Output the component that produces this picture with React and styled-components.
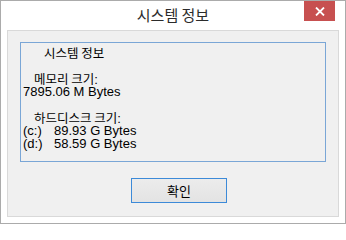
import React from "react";
import styled, { createGlobalStyle } from "styled-components";

const Global = createGlobalStyle`
  html, body { margin: 0; padding: 0; background: #ffffff; }
  #root { width: 346px; height: 224px; }
`;

const Window = styled.div`
  box-sizing: border-box;
  width: 346px;
  height: 224px;
  border: 1px solid #ababab;
  background: #ffffff;
  display: flex;
  flex-direction: column;
  padding: 0 6px 6px 6px;
  font-family: "Liberation Sans", "Noto Sans CJK KR", sans-serif;
`;

const TitleBar = styled.div`
  position: relative;
  height: 29px;
  flex: none;
  display: flex;
  align-items: center;
  justify-content: center;
`;

const Title = styled.div`
  font-family: "Noto Sans CJK KR", sans-serif;
  font-size: 15px;
  color: #2b2b2b;
  line-height: 15px;
  margin-top: -2px;
`;

const CloseButton = styled.div`
  position: absolute;
  top: 0;
  right: 4px;
  width: 31px;
  height: 20px;
  background: #c75050;
  display: flex;
  align-items: center;
  justify-content: center;
`;

const Client = styled.div`
  flex: 1;
  border: 1px solid #d9d9d9;
  background: #f0f0f0;
  display: flex;
  flex-direction: column;
  padding: 11px 12px 0 12px;
`;

const GroupBox = styled.div`
  box-sizing: border-box;
  height: 120px;
  border: 1px solid #7aa6d6;
  padding: 3px 0 0 2px;
  display: flex;
  flex-direction: column;
`;

const Line = styled.div`
  height: 13px;
  line-height: 13px;
  font-size: 13px;
  color: #000;
  white-space: pre;
  padding-left: ${(p) => p.$indent || 0}px;
`;

const Ko = styled.span`
  font-family: "Noto Sans CJK KR", sans-serif;
  font-size: 12.5px;
`;

const Drive = styled.span`
  display: inline-block;
  width: 31px;
`;

const OkButton = styled.button`
  box-sizing: border-box;
  margin: 16px 0 0 111px;
  width: 96px;
  height: 25px;
  border: 1px solid #3c8ad8;
  background: linear-gradient(#ececec, #e3e3e3);
  font-family: "Noto Sans CJK KR", sans-serif;
  font-size: 13px;
  color: #000;
  padding: 0;
  display: flex;
  align-items: center;
  justify-content: center;
`;

export default function App() {
  return (
    <>
      <Global />
      <Window>
        <TitleBar>
          <Title>시스템 정보</Title>
          <CloseButton>
            <svg width="10" height="9" viewBox="0 0 10 9">
              <path d="M1 0.5 L9 8.5 M9 0.5 L1 8.5" stroke="#fff" strokeWidth="1.8" />
            </svg>
          </CloseButton>
        </TitleBar>
        <Client>
          <GroupBox>
            <Line $indent={21}><Ko>시스템 정보</Ko></Line>
            <Line />
            <Line $indent={11}><Ko>메모리 크기</Ko>:</Line>
            <Line>7895.06 M Bytes</Line>
            <Line />
            <Line $indent={11}><Ko>하드디스크 크기</Ko>:</Line>
            <Line><Drive>(c:)</Drive>89.93 G Bytes</Line>
            <Line><Drive>(d:)</Drive>58.59 G Bytes</Line>
          </GroupBox>
          <OkButton>확인</OkButton>
        </Client>
      </Window>
    </>
  );
}
